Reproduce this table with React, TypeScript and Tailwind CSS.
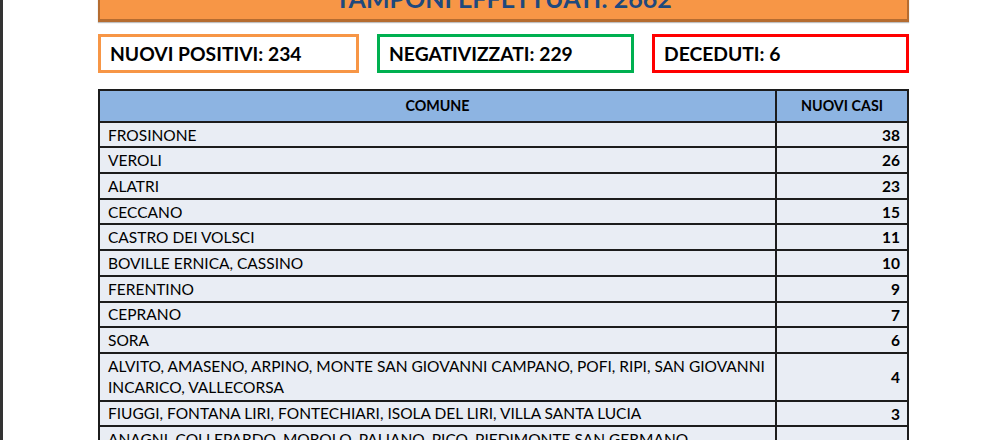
import React from "react";

type Row = { name: React.ReactNode; n: string; tall?: boolean };

const rows: Row[] = [
  { name: "FROSINONE", n: "38" },
  { name: "VEROLI", n: "26" },
  { name: "ALATRI", n: "23" },
  { name: "CECCANO", n: "15" },
  { name: "CASTRO DEI VOLSCI", n: "11" },
  { name: "BOVILLE ERNICA, CASSINO", n: "10" },
  { name: "FERENTINO", n: "9" },
  { name: "CEPRANO", n: "7" },
  { name: "SORA", n: "6" },
  {
    name: (
      <>
        ALVITO, AMASENO, ARPINO, MONTE SAN GIOVANNI CAMPANO, POFI, RIPI, SAN GIOVANNI
        <br />
        INCARICO, VALLECORSA
      </>
    ),
    n: "4",
    tall: true,
  },
  { name: "FIUGGI, FONTANA LIRI, FONTECHIARI, ISOLA DEL LIRI, VILLA SANTA LUCIA", n: "3" },
  {
    name: (
      <>
        ANAGNI, COLLEPARDO, MOROLO, PALIANO, PICO, PIEDIMONTE SAN GERMANO,
        <br />
        SAN DONATO VAL DI COMINO, SANT&apos;ELIA FIUMERAPIDO
      </>
    ),
    n: "2",
    tall: true,
  },
];

export default function App() {
  return (
    <div className="relative h-[440px] w-[990px] overflow-hidden bg-white font-['Lato',_'Liberation_Sans',_sans-serif] text-black">
      <div className="absolute left-0 top-0 h-full w-[3px] bg-[#333333]" />
      <div className="ml-[98px] flex w-[811px] flex-col">
        <div className="-mt-[40px] flex h-[62px] flex-col justify-end border-x-2 border-b-[3px] border-[#b56c30] bg-[#f79646] pb-[8px] shadow-[0_1px_1px_rgba(0,0,0,0.25)]">
          <div className="text-center text-[25px] font-bold leading-[25px] text-[#1f497d]">
            TAMPONI EFFETTUATI: 2662
          </div>
        </div>
        <div className="mt-[12px] flex h-[39px] gap-[18px]">
          <div className="flex w-[261px] items-center border-[3px] border-[#f79646] pl-[9px] pt-[1px] text-[19.3px] font-bold">
            NUOVI POSITIVI: 234
          </div>
          <div className="flex w-[257px] items-center border-[3px] border-[#00b050] pl-[9px] pt-[1px] text-[19.3px] font-bold">
            NEGATIVIZZATI: 229
          </div>
          <div className="flex w-[257px] items-center border-[3px] border-[#ff0000] pl-[9px] pt-[1px] text-[19.3px] font-bold">
            DECEDUTI: 6
          </div>
        </div>
        <div className="mt-[16px] border-x-2 border-t-2 border-[#1c1c1c]">
          <div className="grid h-[31.7px] grid-cols-[675px_1fr] border-b-2 border-[#1c1c1c] bg-[#8db4e2] text-[14.3px] font-bold">
            <div className="flex items-center justify-center">COMUNE</div>
            <div className="flex items-center justify-center border-l-2 border-[#1c1c1c]">NUOVI CASI</div>
          </div>
          {rows.map((r, i) => (
            <div
              key={i}
              className={`grid grid-cols-[675px_1fr] border-b-2 border-[#1c1c1c] bg-[#e9edf4] text-[15.5px] ${
                r.tall ? "h-[47.7px]" : "h-[25.7px]"
              }`}
            >
              <div className="flex items-center whitespace-nowrap pl-[8px] pt-[1px] leading-[21.5px]">
                <div>{r.name}</div>
              </div>
              <div className="flex items-center justify-end border-l-2 border-[#1c1c1c] pr-[7px] pt-[1px] font-bold">
                {r.n}
              </div>
            </div>
          ))}
        </div>
      </div>
    </div>
  );
}
